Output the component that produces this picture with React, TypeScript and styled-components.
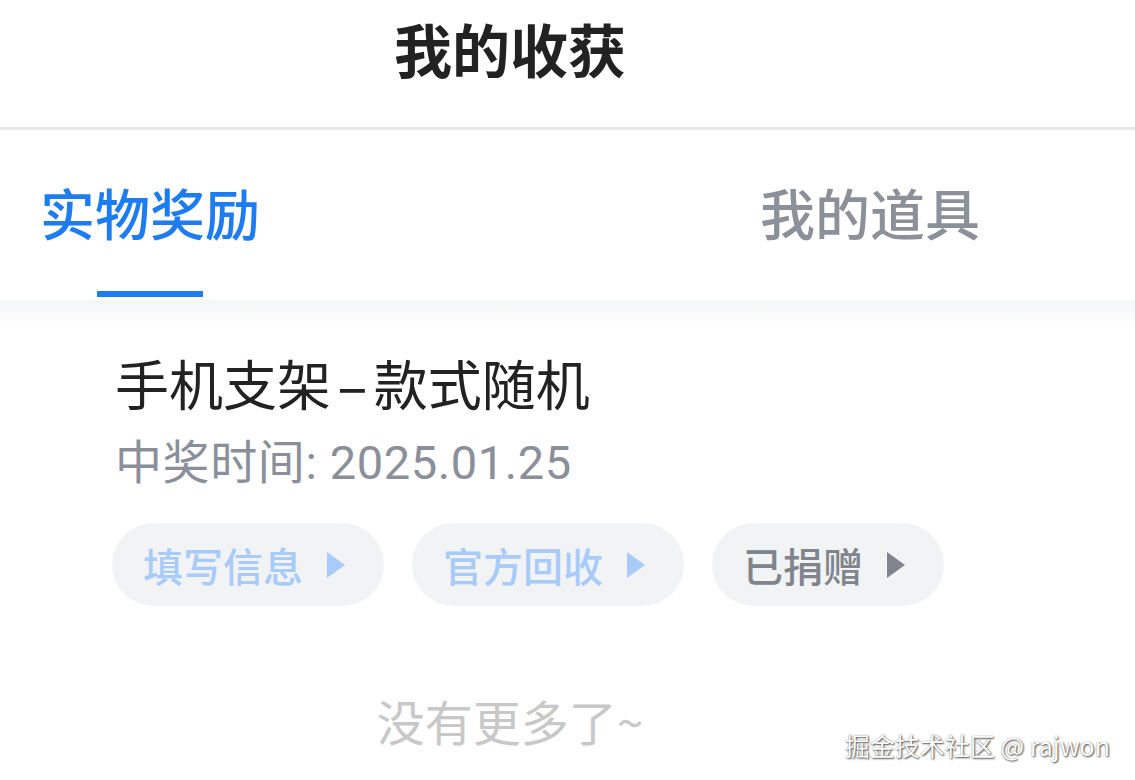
import * as React from 'react';
import styled, { createGlobalStyle } from 'styled-components';

// blue #1e7cf2, grey text #8a8f99, pill bg #f1f3f5

const GlobalStyle = createGlobalStyle`
    html, body {
        margin: 0;
        padding: 0;
        background: #fff;
    }
    body {
        font-family: "Noto Sans CJK SC", "Noto Sans", sans-serif;
    }
`;

const Page = styled.div`
    position: relative;
    width: 1135px;
    height: 780px;
    overflow: hidden;
    background: #fff;
`;

const Header = styled.header`
    height: 127px;
    border-bottom: 3px solid #e8e8e8;
`;

const Inner = styled.div`
    width: 1020px;
`;

const Title = styled.h1`
    margin: 0;
    padding-top: 19px;
    text-align: center;
    font-size: 58px;
    line-height: 58px;
    font-weight: 700;
    color: #222;
`;

const TabBar = styled.nav`
    display: flex;
    justify-content: space-between;
    padding: 54px 40px 0;
    height: 116px;
`;

const Tab = styled.div<{ $active?: boolean }>`
    display: flex;
    flex-direction: column;
    align-items: center;
    font-size: 55px;
    line-height: 55px;
    font-weight: 500;
    color: ${p => (p.$active ? '#1e7cf2' : '#8c9099')};
`;

const Indicator = styled.div`
    margin-top: 52px;
    width: 106px;
    height: 6px;
    background: #1e7cf2;
`;

const Content = styled.main`
    background: linear-gradient(#f5f6f7, #fff 26px);
    padding: 56px 0 0;
`;

const Item = styled.section`
    padding-left: 115px;
`;

const ItemName = styled.div`
    font-size: 54px;
    line-height: 54px;
    color: #222;
`;

const Dash = styled.span`
    display: inline-block;
    margin: 0 12px;
    transform: scaleX(1.8);
`;

const ItemDate = styled.div`
    margin-top: 29px;
    font-family: "Roboto", "Noto Sans CJK SC", sans-serif;
    font-size: 47px;
    line-height: 47px;
    letter-spacing: 0.6px;
    color: #8a8f99;
`;

const Actions = styled.div`
    display: flex;
    gap: 28px;
    margin-top: 37px;
    margin-left: -3px;
`;

const Pill = styled.button<{ $tone: 'blue' | 'grey' }>`
    display: flex;
    align-items: center;
    gap: 24px;
    height: 83px;
    padding: 0 39px 0 31px;
    border: none;
    border-radius: 42px;
    background: #f1f3f5;
    font-family: inherit;
    font-size: 40px;
    font-weight: 500;
    color: ${p => (p.$tone === 'blue' ? '#a8cbfa' : '#80848c')};
`;

const Arrow = styled.span<{ $tone: 'blue' | 'grey' }>`
    width: 0;
    height: 0;
    border-top: 13px solid transparent;
    border-bottom: 13px solid transparent;
    border-left: 18px solid ${p => (p.$tone === 'blue' ? '#a8cbfa' : '#80848c')};
`;

const NoMore = styled.div`
    margin-top: 90px;
    text-align: center;
    font-size: 48px;
    line-height: 48px;
    color: #c8c8c8;
`;

const Watermark = styled.div`
    position: absolute;
    right: 25px;
    bottom: 20px;
    font-size: 25px;
    line-height: 30px;
    color: #fff;
    text-shadow: 1px 1px 2px rgba(0, 0, 0, 0.7), 0 0 1px rgba(0, 0, 0, 0.5);
`;

const actions: { label: string; tone: 'blue' | 'grey' }[] = [
    { label: '填写信息', tone: 'blue' },
    { label: '官方回收', tone: 'blue' },
    { label: '已捐赠', tone: 'grey' },
];

const App = () => {
    return (
        <>
            <GlobalStyle />
            <Page>
                <Header>
                    <Inner>
                        <Title>我的收获</Title>
                    </Inner>
                </Header>

                <Inner>
                    <TabBar>
                        <Tab $active>
                            实物奖励
                            <Indicator />
                        </Tab>
                        <Tab>我的道具</Tab>
                    </TabBar>
                </Inner>

                <Content>
                    <Item>
                        <ItemName>
                            手机支架<Dash>-</Dash>款式随机
                        </ItemName>
                        <ItemDate>中奖时间: 2025.01.25</ItemDate>
                        <Actions>
                            {actions.map(a => (
                                <Pill key={a.label} $tone={a.tone}>
                                    {a.label}
                                    <Arrow $tone={a.tone} />
                                </Pill>
                            ))}
                        </Actions>
                    </Item>
                    <Inner>
                        <NoMore>没有更多了~</NoMore>
                    </Inner>
                </Content>

                <Watermark>掘金技术社区 @ rajwon</Watermark>
            </Page>
        </>
    );
};

export default App;
